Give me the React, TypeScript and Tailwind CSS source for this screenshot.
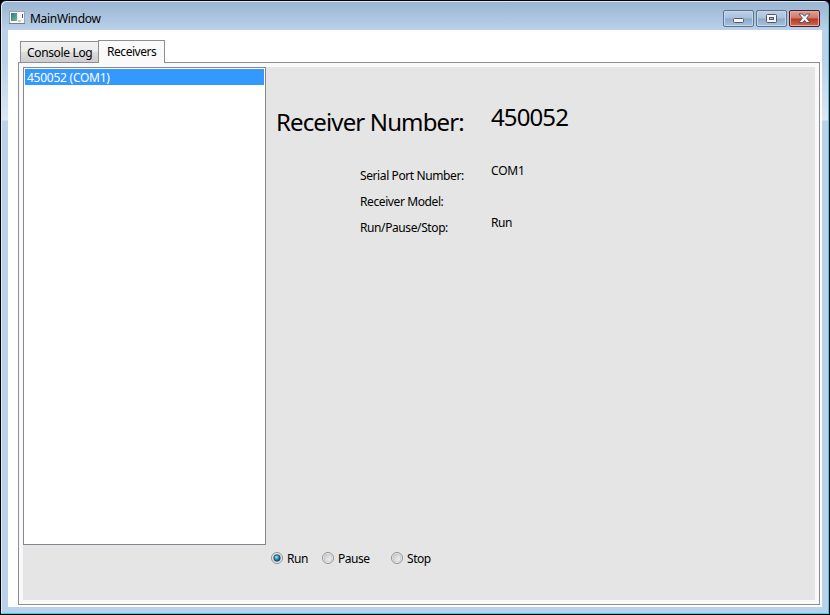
import React from "react";

function AppIcon() {
  return (
    <svg width="16" height="14" viewBox="0 0 16 14" shapeRendering="crispEdges" className="block">
      <defs>
        <linearGradient id="app" x1="0" y1="0" x2="1" y2="1">
          <stop offset="0" stopColor="#2f6f9f" />
          <stop offset="1" stopColor="#6fc07c" />
        </linearGradient>
      </defs>
      <rect x="0.5" y="0.5" width="15" height="12" fill="#f8f8f8" stroke="#a3a3a3" />
      <path d="M0 12H16V13H0Z" fill="#7c7c7c" />
      <rect x="2" y="2" width="6" height="8" fill="url(#app)" />
      <rect x="9" y="9" width="3" height="2" fill="#c8c8c8" />
      <rect x="13" y="3" width="1" height="4" fill="#2f5f8c" />
    </svg>
  );
}

function CaptionButton({ close, children }: { close?: boolean; children: React.ReactNode }) {
  return (
    <div
      className={
        "flex h-[17px] w-[31px] items-center justify-center rounded-[2px] border " +
        (close
          ? "border-[#4d1c27] bg-[linear-gradient(#dfa396_0%,#ce7766_48%,#b8371e_52%,#cf6a50_100%)] shadow-[inset_0_0_0_1px_#e2aaa0]"
          : "border-[#5c7390] bg-[linear-gradient(#bdd0e6_0%,#a9c1dc_48%,#8ba9c9_52%,#a8c3df_100%)] shadow-[inset_0_0_0_1px_#c5d7ea]")
      }
    >
      {children}
    </div>
  );
}

function Radio({ label, checked, className }: { label: string; checked?: boolean; className: string }) {
  return (
    <label className={"flex items-start gap-[3px] " + className}>
      <svg width="13" height="13" viewBox="0 0 13 13" className="mt-px block">
        <defs>
          <linearGradient id="well" x1="0" y1="0" x2="1" y2="1">
            <stop offset="0" stopColor="#c7c9cd" />
            <stop offset="1" stopColor="#f6f6f6" />
          </linearGradient>
          <radialGradient id="dot" cx="0.4" cy="0.35" r="0.65">
            <stop offset="0" stopColor="#a9e9fa" />
            <stop offset="0.5" stopColor="#2b9ccb" />
            <stop offset="1" stopColor="#0a4264" />
          </radialGradient>
        </defs>
        <circle cx="6" cy="6" r="5.5" fill="#f4f4f4" stroke="#8e8f8f" />
        <circle cx="6" cy="6" r="4" fill="url(#well)" stroke="#bcc0c5" strokeWidth="0.7" />
        {checked && <circle cx="6" cy="6" r="3.2" fill="url(#dot)" stroke="#174a68" strokeWidth="0.8" />}
      </svg>
      <span className="whitespace-nowrap tracking-[-0.45px]">{label}</span>
    </label>
  );
}

export default function App() {
  return (
    <div className="h-[615px] w-[830px] bg-black font-['Noto_Sans','Open_Sans',sans-serif] text-[12px] leading-4 text-black">
      <div className="flex h-[615px] w-[830px] flex-col rounded-t-[6px] border border-black bg-[#b9d1ea] bg-[linear-gradient(#99b4d1_0px,#b9d1ea_29px,#b9d1ea_60px,#dbe7f4_119px,#b9d1ea_120px)] px-[7px] pb-[7px] shadow-[inset_-1px_-1px_0_#35d0ea,inset_1px_1px_0_#dcebf8]">
        <header className="flex h-[29px] shrink-0 items-start">
          <div className="mt-[10px] ml-[1px]"><AppIcon /></div>
          <h1 className="mt-[10px] ml-[5px] tracking-[-0.3px]">MainWindow</h1>
          <div className="mt-[9px] mr-[2px] ml-auto flex gap-[2px]">
            <CaptionButton>
              <svg width="13" height="7" viewBox="0 0 13 7" className="mt-[4px]"><rect x="1.5" y="1.5" width="10" height="4" rx="1" fill="#f5f5f5" stroke="#535666" /></svg>
            </CaptionButton>
            <CaptionButton>
              <svg width="11" height="9" viewBox="0 0 11 9"><rect x="0.5" y="0.5" width="10" height="8" rx="1" fill="#f5f5f5" stroke="#535666" /><rect x="3.5" y="3.5" width="4" height="2" fill="#a8bed6" stroke="#535666" /></svg>
            </CaptionButton>
            <CaptionButton close>
              <svg width="13" height="11" viewBox="0 0 13 11"><path d="M1 1H4.5L6.5 3.2 8.5 1H12L8.7 5.2 12 9.5H8.5L6.5 7.3 4.5 9.5H1L4.3 5.2Z" fill="#f5f5f5" stroke="#535666" /></svg>
            </CaptionButton>
          </div>
        </header>

        <main className="flex h-[577px] w-[814px] shrink-0 flex-col bg-white pt-[10px] pr-[2px] pl-[10px]">
          <nav className="z-10 flex h-[23px] shrink-0 items-end pl-[2px]">
            <div className="mb-px flex h-[21px] w-[78px] border border-r-0 border-b-0 border-[#8c8e94] bg-[linear-gradient(#f2f2f2_0%,#ebebeb_50%,#dddddd_50%,#cdcdcd_100%)] pt-[3px] pl-[6px]">
              <span className="whitespace-nowrap tracking-[-0.35px]">Console Log</span>
            </div>
            <div className="flex h-[23px] w-[67px] border border-b-0 border-[#8c8e94] bg-[#f9f9f9] pt-[3px] pl-[8px]">
              <span className="tracking-[-0.45px]">Receivers</span>
            </div>
          </nav>
          <section className="-mt-px h-[543px] w-[802px] shrink-0 border border-[#8c8e94] bg-[#f9f9f9] p-[4px]">
            <div className="flex h-[533px] w-[792px] bg-[#e5e5e5]">
              <div className="h-[478px] w-[243px] shrink-0 border border-[#828790] bg-white p-px">
                <div className="h-[16px] bg-[#3399ff] pl-[2px] leading-[17px] tracking-[-0.25px] text-white">450052 (COM1)</div>
              </div>
              <div className="flex flex-1 flex-col">
                <div className="flex h-[480px] pl-[10px]">
                  <div className="flex w-[188px] flex-col items-end whitespace-nowrap">
                    <h2 className="mt-[39px] h-[32px] w-[188px] text-[24px] leading-[32px] tracking-[-0.87px]">Receiver Number:</h2>
                    <dl className="mt-[25px] w-[104px] leading-[26px] tracking-[-0.4px]">
                      <dt>Serial Port Number:</dt>
                      <dt>Receiver Model:</dt>
                      <dt>Run/Pause/Stop:</dt>
                    </dl>
                  </div>
                  <div className="ml-[27px] whitespace-nowrap">
                    <p className="mt-[34px] h-[32px] text-[24px] leading-[32px] tracking-[-0.9px]">450052</p>
                    <p className="mt-[25px] h-[52px] leading-[26px] tracking-[-0.2px]">COM1</p>
                    <p className="leading-[26px] tracking-[-0.4px]">Run</p>
                  </div>
                </div>
                <div className="flex pt-[4px] pl-[5px]">
                  <Radio label="Run" checked className="w-[51px]" />
                  <Radio label="Pause" className="w-[69px]" />
                  <Radio label="Stop" className="w-[51px]" />
                </div>
              </div>
            </div>
          </section>
        </main>
      </div>
    </div>
  );
}
